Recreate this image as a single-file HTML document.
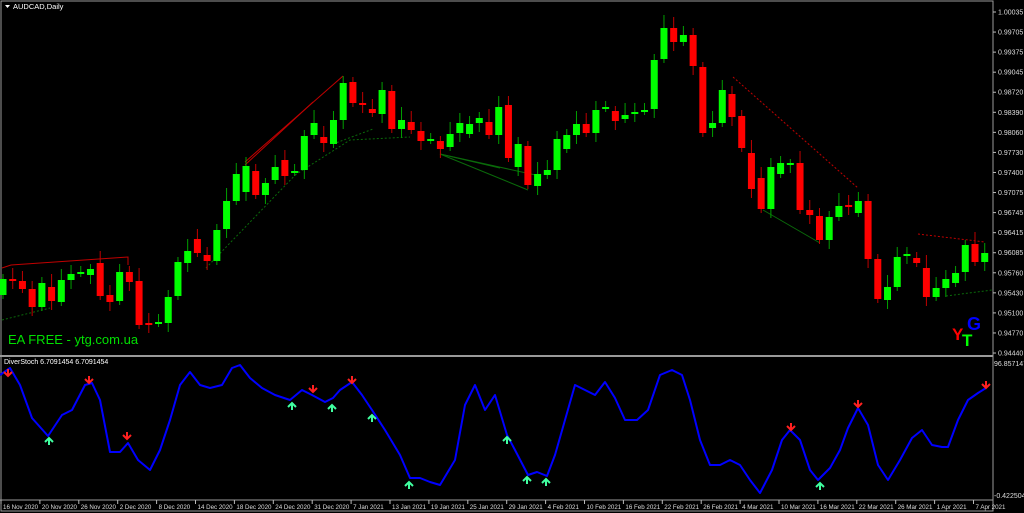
<!DOCTYPE html>
<html><head><meta charset="utf-8"><style>
html,body{margin:0;padding:0;background:#000;width:1024px;height:513px;overflow:hidden}
svg{display:block}
text{font-family:"Liberation Sans",sans-serif}
</style></head><body>
<svg id="s" width="1024" height="513" viewBox="0 0 1024 513" xmlns="http://www.w3.org/2000/svg">
<rect width="1024" height="513" fill="#000"/>
<rect x="1" y="1" width="992" height="510" fill="none" stroke="#9a9a9a" stroke-width="1"/>
<line x1="0" y1="356" x2="993" y2="356" stroke="#9a9a9a" stroke-width="2"/>
<line x1="0" y1="500" x2="993" y2="500" stroke="#9a9a9a" stroke-width="1"/>
<polygon points="5,5 10,5 7.5,8" fill="#fff"/>
<text x="13" y="9" font-size="7.5" fill="#fff">AUDCAD,Daily</text>
<text x="4" y="364" font-size="7" fill="#fff">DiverStoch 6.7091454 6.7091454</text>
<g id="lines" stroke-width="1" fill="none">
<polyline points="2,268 11,265 128,257 128,265" stroke="#c00000"/>
<line x1="245" y1="162" x2="343" y2="76" stroke="#c00000"/>
<line x1="245" y1="165" x2="313" y2="102" stroke="#c00000"/>
<line x1="2" y1="320" x2="50" y2="308" stroke="#0a6a0a" stroke-dasharray="2,2"/>
<line x1="206" y1="268" x2="300" y2="170" stroke="#0a6a0a" stroke-dasharray="2,2"/>
<polyline points="295,175 350,140 410,137" stroke="#0a6a0a" stroke-dasharray="2,2"/>
<line x1="333" y1="144" x2="373" y2="129" stroke="#0a6a0a" stroke-dasharray="2,2"/>
<line x1="440" y1="154" x2="528" y2="190" stroke="#0a6a0a"/>
<line x1="440" y1="154" x2="500" y2="168" stroke="#0a6a0a"/>
<line x1="440" y1="154" x2="540" y2="176" stroke="#0a6a0a"/>
<line x1="733" y1="77" x2="858" y2="188" stroke="#c00000" stroke-dasharray="2,2"/>
<line x1="763" y1="210" x2="820" y2="243" stroke="#0a6a0a"/>
<line x1="918" y1="234" x2="985" y2="242" stroke="#c00000" stroke-dasharray="2,2"/>
<line x1="946" y1="296" x2="992" y2="290" stroke="#0a6a0a" stroke-dasharray="2,2"/>
</g>
<g id="candles"></g>
<g id="axis" font-size="7" fill="#ddd"></g>
<g id="daxis" font-size="6.2" fill="#ddd"></g>
<polyline id="osc" fill="none" stroke="#0000ff" stroke-width="2" stroke-linejoin="round"/>
<g id="arrows"></g>
<text x="8" y="344" font-size="13" fill="#00e000">EA FREE - ytg.com.ua</text>
<text x="952" y="340" font-size="17" font-weight="bold" fill="#ff0000">Y</text>
<text x="962" y="346" font-size="17" font-weight="bold" fill="#00ff00">T</text>
<text x="967" y="330" font-size="18" font-weight="bold" fill="#0000ff">G</text>
</svg>
<script>
var ns="http://www.w3.org/2000/svg";
function el(t,a,p){var e=document.createElementNS(ns,t);for(var k in a)e.setAttribute(k,a[k]);p.appendChild(e);return e;}
var B=[[279,295,1],[280,280,0],[281,289,0],[289,307,0],[283,307,1],[287,301,0],[280,302,1],[274,280,1],[273,273,1],[269,275,1],
[263,296,0],[295,302,0],[272,301,1],[272,282,0],[281,325,0],[324,324,0],[323,323,1],[297,323,1],[262,296,1],[251,263,1],
[239,253,0],[255,261,0],[230,261,1],[201,229,1],[174,201,1],[166,192,1],[171,195,0],[183,195,1],[167,180,1],[160,176,0],
[172,172,1],[136,170,1],[123,135,1],[137,143,0],[120,144,1],[83,120,1],[82,103,0],[104,104,0],[109,113,0],[90,114,1],
[91,129,0],[120,129,1],[122,130,0],[131,141,0],[140,140,1],[141,149,0],[134,147,1],[123,133,1],[124,134,1],[118,123,1],
[122,135,0],[107,135,1],[105,158,0],[144,167,1],[146,185,0],[174,186,1],[170,175,1],[139,170,1],[135,149,1],[124,135,1],
[124,133,0],[110,133,1],[108,108,1],[111,121,0],[115,119,1],[113,113,1],[111,111,1],[60,109,1],[28,59,1],[28,42,0],
[35,42,1],[35,66,0],[67,133,0],[123,128,1],[90,123,1],[94,117,0],[116,148,0],[153,189,0],[178,209,0],[167,209,1],
[163,174,1],[164,164,1],[163,210,0],[210,215,0],[216,240,0],[217,240,1],[206,217,1],[206,206,0],[201,213,1],[201,259,0],
[259,299,0],[287,300,1],[257,287,1],[255,255,1],[258,263,0],[268,297,0],[288,297,1],[279,288,1],[273,283,1],[245,272,1],
[244,262,0],[253,262,1]];
var g=document.getElementById('candles');
B.forEach(function(b,i){
 var x=3+i*9.72, c=b[2]?'#00ff00':'#ff0000', wc=b[2]?'#00a000':'#c00000';
 var h=b[1]-b[0];
 var t=b[0]-(5+(i*7)%9), bt=b[1]+(4+(i*5)%10);
 el('line',{x1:x,y1:t,x2:x,y2:bt,stroke:wc,'stroke-width':1},g);
 if(h<2) el('rect',{x:x-3.5,y:b[0]-1,width:7,height:2,fill:c},g);
 else el('rect',{x:x-3.5,y:b[0],width:7,height:h,fill:c},g);
});
var ax=document.getElementById('axis');
var P=["1.00035","0.99705","0.99375","0.99045","0.98720","0.98390","0.98060","0.97730","0.97400","0.97075","0.96745","0.96415","0.96085","0.95760","0.95430","0.95100","0.94770","0.94440"];
P.forEach(function(p,i){var y=12+i*20.06;el('line',{x1:993,y1:y,x2:996,y2:y,stroke:'#bbb'},ax);var t=el('text',{x:998,y:y+2.5},ax);t.textContent=p;});
var t1=el('text',{x:994,y:366},ax);t1.textContent="96.857147";
var t2=el('text',{x:994,y:498},ax);t2.textContent="-0.422504";
var dx=document.getElementById('daxis');
var D=["16 Nov 2020","20 Nov 2020","26 Nov 2020","2 Dec 2020","8 Dec 2020","14 Dec 2020","18 Dec 2020","24 Dec 2020","31 Dec 2020","7 Jan 2021","13 Jan 2021","19 Jan 2021","25 Jan 2021","29 Jan 2021","4 Feb 2021","10 Feb 2021","16 Feb 2021","22 Feb 2021","26 Feb 2021","4 Mar 2021","10 Mar 2021","16 Mar 2021","22 Mar 2021","26 Mar 2021","1 Apr 2021","7 Apr 2021"];
D.forEach(function(d,i){var x=1+i*38.9;el('line',{x1:x,y1:500,x2:x,y2:504,stroke:'#bbb'},dx);var t=el('text',{x:x+2,y:509},dx);t.textContent=d;});
var O=[[0,375],[10,368],[20,385],[32,418],[48,436],[62,415],[72,410],[85,385],[92,383],[100,400],[110,452],[120,452],[128,443],[138,460],[150,470],[160,450],[170,420],[180,385],[190,372],[200,385],[210,388],[222,385],[232,368],[240,365],[250,378],[262,388],[275,395],[290,400],[302,390],[312,395],[325,402],[333,398],[340,390],[352,382],[362,395],[372,410],[385,430],[400,455],[410,478],[420,478],[430,482],[440,485],[455,460],[465,405],[475,385],[485,410],[495,395],[507,435],[515,450],[528,475],[537,472],[547,476],[555,455],[565,420],[575,385],[585,390],[595,395],[605,382],[615,398],[625,420],[637,420],[648,410],[660,375],[672,370],[682,375],[690,400],[700,440],[710,465],[720,465],[730,460],[740,465],[750,480],[760,493],[772,470],[782,440],[790,430],[800,440],[810,470],[818,480],[830,468],[840,450],[848,428],[858,408],[868,425],[878,465],[888,480],[900,460],[912,438],[922,430],[932,445],[942,447],[948,447],[958,420],[968,400],[978,393],[986,388]];
document.getElementById('osc').setAttribute('points',O.map(function(p){return p.join(',')}).join(' '));
var ar=document.getElementById('arrows');
[[8,376],[89,383],[127,439],[313,392],[352,383],[791,430],[858,407],[986,388]].forEach(function(p){
 el('path',{d:'M'+p[0]+','+(p[1]-7)+' V'+p[1]+' M'+(p[0]-4)+','+(p[1]-4)+' L'+p[0]+','+p[1]+' L'+(p[0]+4)+','+(p[1]-4),stroke:'#ff2020','stroke-width':2,fill:'none'},ar);});
[[49,438],[292,403],[332,405],[372,415],[409,482],[507,437],[527,477],[546,479],[820,483]].forEach(function(p){
 el('path',{d:'M'+p[0]+','+(p[1]+7)+' V'+p[1]+' M'+(p[0]-4)+','+(p[1]+4)+' L'+p[0]+','+p[1]+' L'+(p[0]+4)+','+(p[1]+4),stroke:'#40ffa0','stroke-width':2,fill:'none'},ar);});
</script>
</body></html>
